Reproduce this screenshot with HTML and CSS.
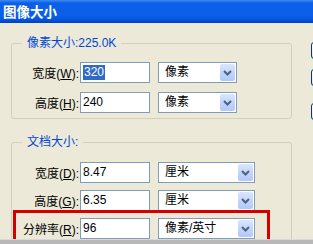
FILE: index.html
```html
<!DOCTYPE html>
<html>
<head>
<meta charset="utf-8">
<link rel="stylesheet" href="styles.css">
</head>
<body>
<div class="titlebar">图像大小</div>
<div class="content">
  <div class="main">
    <fieldset class="group g1">
      <legend>像素大小:225.0K</legend>
      <div class="rows">
        <div class="row">
          <span class="label">宽度(<u>W</u>):</span>
          <span class="field"><span class="sel">320</span></span>
          <span class="combo c1"><span class="combo-text">像素</span><span class="combo-btn"><svg width="15" height="17" viewBox="0 0 15 17"><path d="M4 7 L7.5 10.5 L11 7" fill="none" stroke="#4d6185" stroke-width="2"/></svg></span></span>
        </div>
        <div class="row">
          <span class="label">高度(<u>H</u>):</span>
          <span class="field">240</span>
          <span class="combo c1"><span class="combo-text">像素</span><span class="combo-btn"><svg width="15" height="17" viewBox="0 0 15 17"><path d="M4 7 L7.5 10.5 L11 7" fill="none" stroke="#4d6185" stroke-width="2"/></svg></span></span>
        </div>
      </div>
    </fieldset>
    <fieldset class="group g2">
      <legend>文档大小:</legend>
      <div class="rows rows2">
        <div class="row">
          <span class="label">宽度(<u>D</u>):</span>
          <span class="field">8.47</span>
          <span class="combo c2"><span class="combo-text">厘米</span><span class="combo-btn"><svg width="15" height="17" viewBox="0 0 15 17"><path d="M4 7 L7.5 10.5 L11 7" fill="none" stroke="#4d6185" stroke-width="2"/></svg></span></span>
        </div>
        <div class="row">
          <span class="label">高度(<u>G</u>):</span>
          <span class="field">6.35</span>
          <span class="combo c2"><span class="combo-text">厘米</span><span class="combo-btn"><svg width="15" height="17" viewBox="0 0 15 17"><path d="M4 7 L7.5 10.5 L11 7" fill="none" stroke="#4d6185" stroke-width="2"/></svg></span></span>
        </div>
        <div class="row">
          <span class="label">分辨率(<u>R</u>):</span>
          <span class="field">96</span>
          <span class="combo c2"><span class="combo-text">像素/英寸</span><span class="combo-btn"><svg width="15" height="17" viewBox="0 0 15 17"><path d="M4 7 L7.5 10.5 L11 7" fill="none" stroke="#4d6185" stroke-width="2"/></svg></span></span>
        </div>
      </div>
    </fieldset>
  </div>
  <div class="buttons">
    <span class="btn"></span>
    <span class="btn"></span>
    <span class="btn b3"></span>
  </div>
</div>
<div class="highlight"></div>
<div class="bottom-band"></div>
</body>
</html>
```

FILE: styles.css
```css
* { box-sizing: border-box; }
html, body { margin: 0; padding: 0; }
body {
  width: 313px;
  height: 244px;
  overflow: hidden;
  position: relative;
  background: #ece9d8;
  font-family: "Liberation Sans", "Noto Sans CJK SC", sans-serif;
  font-size: 12px;
  color: #000;
}
.titlebar {
  height: 23px;
  line-height: 23px;
  padding-left: 3px;
  color: #fff;
  font-family: "Noto Sans CJK SC", sans-serif;
  font-weight: bold;
  font-size: 13.5px;
  background: linear-gradient(to bottom, #3f8cf3 0, #0b5ee8 3px, #0a5fe8 16px, #0553dc 20px, #003fc0 23px);
}
.content {
  display: flex;
  padding-left: 11px;
}
.main {
  width: 281px;
  flex: none;
  display: flex;
  flex-direction: column;
}
.group {
  margin: 0;
  border: 1px solid #d0d0bf;
  border-radius: 3px;
  min-width: 0;
}
.group legend {
  margin-left: 10px;
  padding: 0 5px;
  height: 14px;
  line-height: 14px;
  color: #0046d5;
}
.g1 {
  margin-top: 13px;
  padding: 12px 0 5px 0;
}
.g2 {
  margin-top: 16px;
  padding: 13px 0 20px 0;
}
.rows {
  display: flex;
  flex-direction: column;
  gap: 9px;
}
.rows2 { gap: 7px; }
.row {
  display: flex;
  align-items: center;
  height: 21px;
}
.label {
  width: 68px;
  flex: none;
  text-align: right;
  padding-right: 1px;
  white-space: nowrap;
}
.field {
  width: 70px;
  height: 21px;
  flex: none;
  border: 1px solid #7f9db9;
  background: #fff;
  padding-left: 2px;
  line-height: 19px;
  white-space: nowrap;
}
.sel {
  display: inline-block;
  background: #316ac5;
  color: #fff;
  line-height: 15px;
  padding: 0 1px;
}
.combo {
  margin-left: 8px;
  height: 21px;
  flex: none;
  border: 1px solid #7f9db9;
  background: #fff;
  display: flex;
  justify-content: space-between;
}
.c1 { width: 79px; }
.c2 { width: 97px; }
.combo-text {
  padding-left: 6px;
  line-height: 19px;
  white-space: nowrap;
}
.combo-btn {
  width: 15px;
  height: 17px;
  margin: 1px;
  border-radius: 2px;
  background: linear-gradient(to bottom, #dbe6fd 0, #c4d5fb 50%, #b3c8f7 100%);
  display: flex;
}
.buttons {
  margin-left: 19px;
  padding-top: 19px;
  display: flex;
  flex-direction: column;
  flex: none;
}
.btn {
  display: block;
  width: 75px;
  height: 17px;
  border: 1px solid #003c74;
  border-radius: 3px;
  background: linear-gradient(to bottom, #ffffff, #ecebe6 80%, #d6d0c5);
  margin-bottom: 10px;
}
.btn.b3 { margin-top: 7px; }
.highlight {
  position: absolute;
  left: 13px;
  top: 210px;
  width: 257px;
  height: 40px;
  border: 3px solid #d40000;
}
.bottom-band {
  position: absolute;
  left: 0;
  right: 0;
  bottom: 0;
  height: 5px;
  background: #b8b8b8;
  border-top: 1px solid #d8d8d8;
}
```
